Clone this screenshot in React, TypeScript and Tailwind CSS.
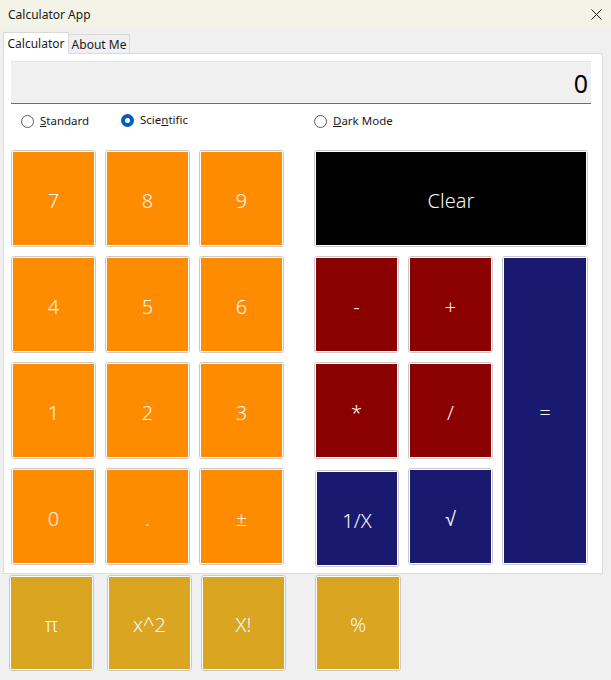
import React from "react";

type KeyProps = { label: string; tone: string; className?: string };

// WinForms-style flat colored button: thin grey rim, 1px white gap, colored face
function Key({ label, tone, className = "" }: KeyProps) {
  return (
    <button className={`rounded-[3px] border border-[#c9c9c9] bg-white p-px ${className}`}>
      <span className={`flex h-full w-full items-center justify-center pt-[4px] text-[20px] font-light text-[#f7f7f7] ${tone}`}>
        {label}
      </span>
    </button>
  );
}

const orange = "bg-[#ff8c00]";
const red = "bg-[#8b0000]";
const navy = "bg-[#191970]";
const gold = "bg-[#daa520]";

function Radio({ checked, children, className = "" }: { checked?: boolean; children: React.ReactNode; className?: string }) {
  return (
    <div className={`flex h-4 items-center gap-[6px] text-[11.5px] text-[#1a1a1a] ${className}`}>
      {checked ? (
        <span className="flex h-[13px] w-[13px] items-center justify-center rounded-full bg-[#005fb8]">
          <span className="h-[5px] w-[5px] rounded-full bg-white" />
        </span>
      ) : (
        <span className="h-[13px] w-[13px] rounded-full border border-[#5c5c5c] bg-white" />
      )}
      <span>{children}</span>
    </div>
  );
}

export default function App() {
  return (
    <div className="flex h-[680px] w-[611px] flex-col bg-[#f0f0f0] font-['Noto_Sans',sans-serif]">
      {/* title bar */}
      <div className="flex h-[29px] items-center justify-between bg-[#f3f3e8] pl-2 pr-[9px]">
        <span className="text-[12px] text-[#1a1a1a]">Calculator App</span>
        <svg width="11" height="11" viewBox="0 0 11 11" aria-hidden="true">
          <path d="M0.5 0.5 L10.5 10.5 M10.5 0.5 L0.5 10.5" stroke="#1a1a1a" strokeWidth="1" />
        </svg>
      </div>

      {/* tab control */}
      <div className="px-[3px] pt-[3px]">
        <div className="relative z-10 flex h-[22px] items-end">
          <div className="flex h-[22px] w-[66px] items-start justify-center border border-b-0 border-[#d9d9d9] bg-white pt-[2px] text-[12px] text-[#1a1a1a]">
            Calculator
          </div>
          <div className="mb-px flex h-[19px] w-[61px] items-center justify-center border border-b-0 border-l-0 border-[#d9d9d9] bg-[#f0f0f0] pt-px text-[12px] text-[#1a1a1a]">
            About Me
          </div>
        </div>

        <div className="-mt-px h-[521px] w-[600px] border border-[#dcdcdc] bg-white">
          {/* display */}
          <div className="ml-[7px] mt-[7px] flex h-[43px] w-[580px] items-center justify-end border-b border-t border-b-[#6d6d6d] border-t-[#e6e6e6] bg-[#f0f0f0] pr-[3px] pt-[3px] text-[25px] text-black">
            0
          </div>

          {/* mode radios */}
          <div className="flex h-[46px] items-start pl-[17px] pt-[9px]">
            <Radio className="w-[100px]">
              <u>S</u>tandard
            </Radio>
            <Radio checked className="-mt-[1px] w-[193px]">
              Scie<u>n</u>tific
            </Radio>
            <Radio>
              <u>D</u>ark Mode
            </Radio>
          </div>

          {/* keypad */}
          <div className="ml-[7px] flex gap-[30px]">
            <div className="grid grid-cols-[85px_85px_85px] grid-rows-[97px_97px_97px_97px] gap-[9px]">
              {["7", "8", "9", "4", "5", "6", "1", "2", "3", "0", ".", "±"].map((k) => (
                <Key key={k} label={k} tone={orange} />
              ))}
            </div>
            <div className="grid grid-cols-[85px_85px_86px] grid-rows-[97px_97px_97px_97px] gap-[9px]">
              <Key label="Clear" tone="bg-black" className="col-span-3" />
              <Key label="-" tone={red} />
              <Key label="+" tone={red} />
              <Key label="=" tone={navy} className="row-span-3" />
              <Key label="*" tone={red} />
              <Key label="/" tone={red} />
              <Key label="1/X" tone={navy} className="ml-px mt-[2px] h-[97px]" />
              <Key label="√" tone={navy} />
            </div>
          </div>
        </div>
      </div>

      {/* scientific row */}
      <div className="flex pt-px">
        <Key label="π" tone={gold} className="ml-[9px] h-[96px] w-[85px]" />
        <Key label="x^2" tone={gold} className="ml-[13px] h-[96px] w-[85px]" />
        <Key label="X!" tone={gold} className="ml-[9px] h-[96px] w-[85px]" />
        <Key label="%" tone={gold} className="ml-[29px] h-[96px] w-[86px]" />
      </div>
    </div>
  );
}
